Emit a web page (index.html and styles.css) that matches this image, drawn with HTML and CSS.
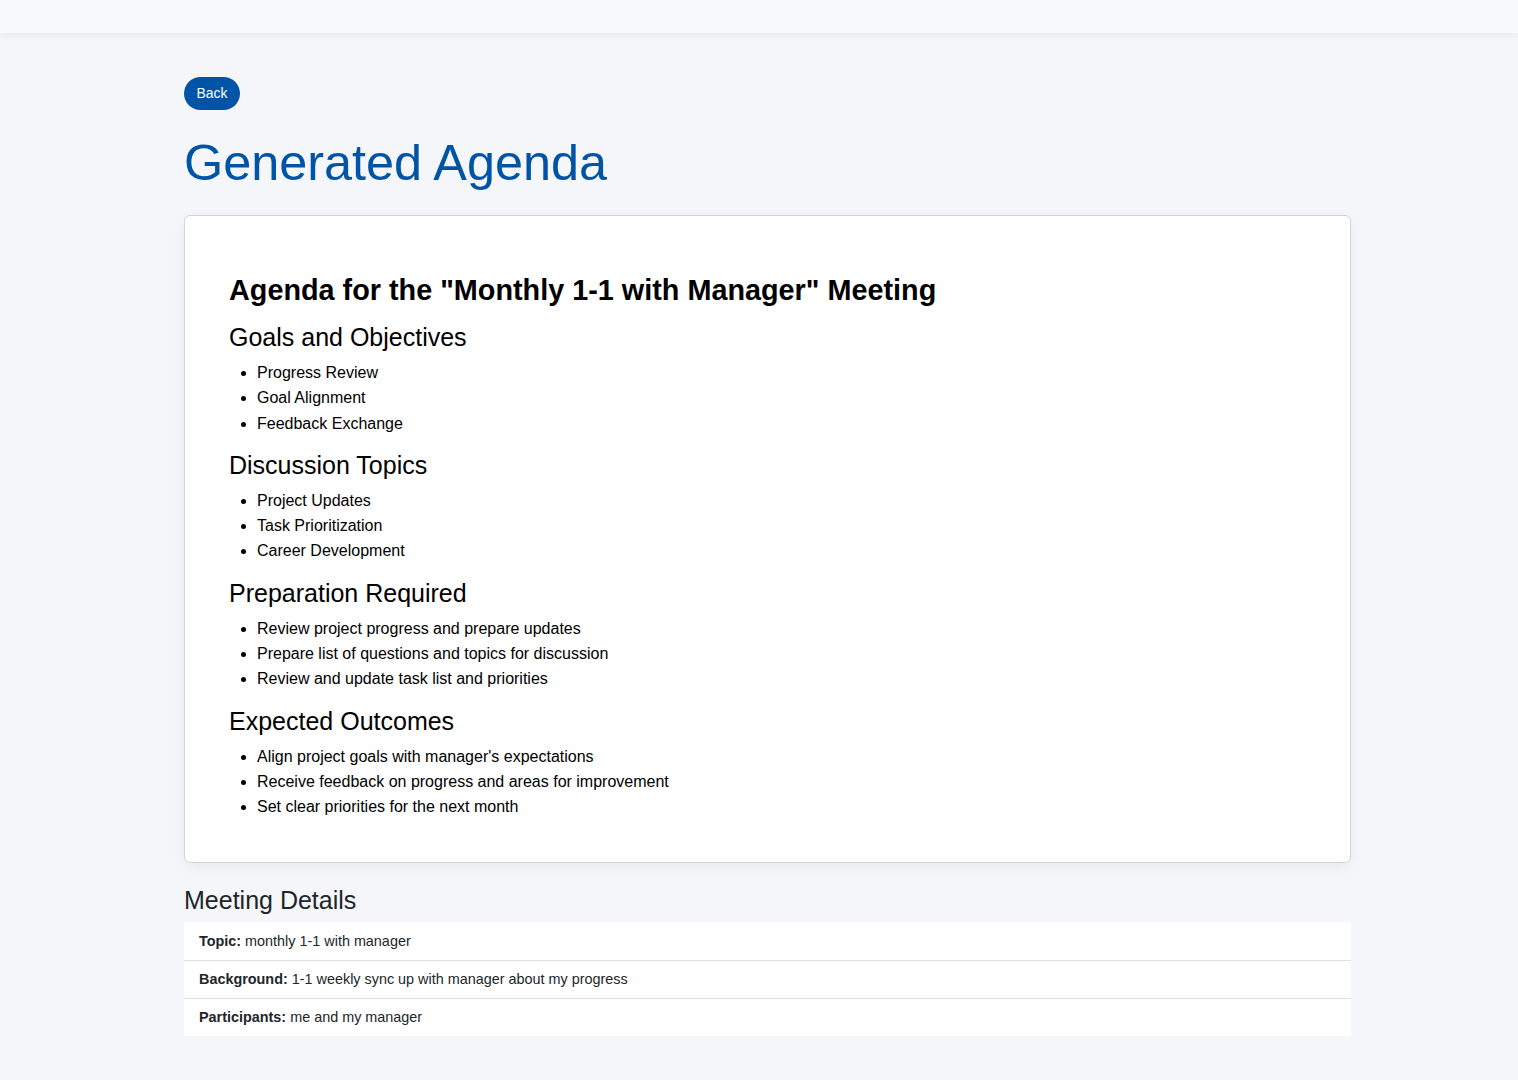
FILE: index.html
```html
<!DOCTYPE html>
<html lang="en">
<head>
<meta charset="utf-8">
<title>Generated Agenda</title>
<link rel="stylesheet" href="styles.css">
</head>
<body>
<header class="topbar"></header>
<main class="page">
  <button class="back-btn" type="button">Back</button>
  <h1 class="page-title">Generated Agenda</h1>
  <section class="agenda-card">
    <h2 class="agenda-title">Agenda for the "Monthly 1-1 with Manager" Meeting</h2>
    <h3 class="section-title">Goals and Objectives</h3>
    <ul class="item-list">
      <li>Progress Review</li>
      <li>Goal Alignment</li>
      <li>Feedback Exchange</li>
    </ul>
    <h3 class="section-title">Discussion Topics</h3>
    <ul class="item-list">
      <li>Project Updates</li>
      <li>Task Prioritization</li>
      <li>Career Development</li>
    </ul>
    <h3 class="section-title">Preparation Required</h3>
    <ul class="item-list">
      <li>Review project progress and prepare updates</li>
      <li>Prepare list of questions and topics for discussion</li>
      <li>Review and update task list and priorities</li>
    </ul>
    <h3 class="section-title">Expected Outcomes</h3>
    <ul class="item-list">
      <li>Align project goals with manager's expectations</li>
      <li>Receive feedback on progress and areas for improvement</li>
      <li>Set clear priorities for the next month</li>
    </ul>
  </section>
  <h3 class="details-title">Meeting Details</h3>
  <ul class="details-list">
    <li class="details-row"><strong>Topic:</strong> monthly 1-1 with manager</li>
    <li class="details-row"><strong>Background:</strong> 1-1 weekly sync up with manager about my progress</li>
    <li class="details-row"><strong>Participants:</strong> me and my manager</li>
  </ul>
</main>
</body>
</html>
```
FILE: styles.css
```css
html, body {
  margin: 0;
  padding: 0;
}
body {
  background: #f5f6fa;
  font-family: "Liberation Sans", Arial, sans-serif;
  color: #000;
}
.topbar {
  height: 33px;
  background: #f8f9fb;
  box-shadow: 0 2px 8px rgba(0, 0, 0, 0.06);
}
.page {
  width: 1167px;
  margin: 0 0 0 184px;
  padding: 44px 0 40px;
}
.back-btn {
  display: block;
  font-family: "Liberation Sans", Arial, sans-serif;
  font-size: 14px;
  line-height: 21px;
  padding: 6px 12.5px;
  border: none;
  border-radius: 17px;
  background: #0054a5;
  color: #fff;
  cursor: pointer;
}
.page-title {
  margin: 23px 0 22px;
  font-size: 50.4px;
  line-height: 60px;
  font-weight: 400;
  color: #0054a5;
}
.agenda-card {
  background: #fff;
  border: 1px solid #d2d3da;
  border-radius: 6px;
  box-shadow: 0 4px 14px rgba(0, 0, 0, 0.05);
  padding: 57px 44px 42px;
}
.agenda-title {
  margin: 0 0 14px;
  font-size: 28.8px;
  line-height: 35px;
  font-weight: 700;
}
.section-title {
  margin: 0 0 8px;
  font-size: 25px;
  line-height: 30px;
  font-weight: 400;
}
.item-list {
  margin: 0 0 14px;
  padding-left: 28px;
  font-size: 16px;
  line-height: 25.3px;
}
.agenda-card > :last-child {
  margin-bottom: 0;
}
.details-title {
  margin: 22px 0 7px;
  font-size: 25px;
  line-height: 30px;
  font-weight: 400;
  color: #212529;
}
.details-list {
  list-style: none;
  margin: 0;
  padding: 0;
  background: #fff;
}
.details-row {
  padding: 8px 15px;
  font-size: 14.4px;
  line-height: 21px;
  color: #212529;
  border-top: 1px solid #dee0e6;
}
.details-row:first-child {
  border-top: none;
  padding-top: 9.5px;
  padding-bottom: 7.5px;
}
```
